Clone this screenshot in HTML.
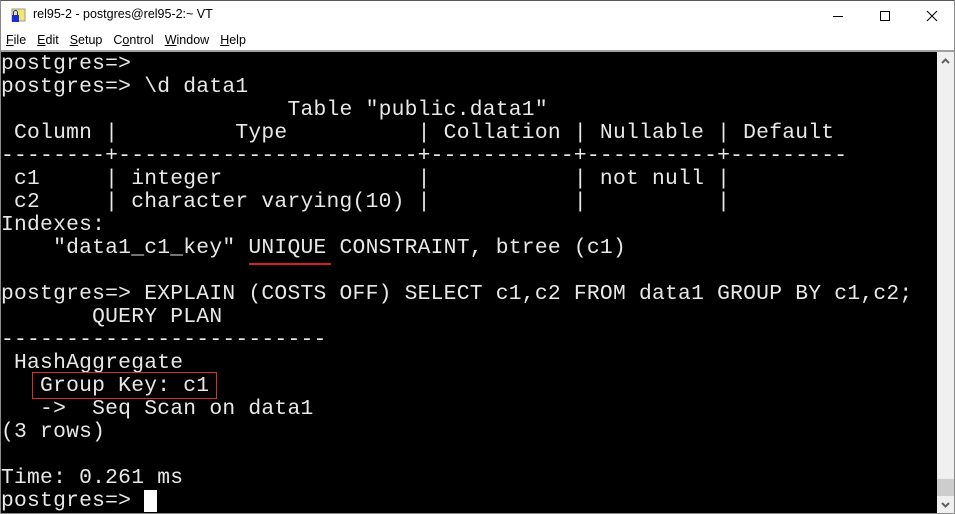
<!DOCTYPE html>
<html><head><meta charset="utf-8"><style>
*{margin:0;padding:0;box-sizing:border-box}
body{width:955px;height:514px;overflow:hidden;background:#fff;position:relative;font-family:"Segoe UI","Liberation Sans",sans-serif}
.frame{position:absolute;left:0;top:0;width:955px;height:514px;border:1px solid #8a8a8a;border-top:1px solid #5a5a5a}
.title{position:absolute;left:33px;top:7px;font-size:12.5px;color:#000}
.menu{position:absolute;top:33px;left:6px;font-size:12.5px;color:#000}
.menu span{margin-right:11px}
.menu u{text-decoration:underline}
.sep{position:absolute;left:1px;top:50px;width:953px;height:2px;background:#a0a0a0}
.term{position:absolute;left:1px;top:52px;width:936px;height:461px;background:#000}
pre{position:absolute;left:1px;top:53px;font-family:"Liberation Mono","Courier New",monospace;font-size:21.3px;letter-spacing:0.24px;line-height:23px;color:#e8e8e8;white-space:pre}
.sb{position:absolute;left:937px;top:52px;width:17px;height:461px;background:#f0f0f0}
.thumb{position:absolute;left:937px;top:479px;width:17px;height:17px;background:#cdcdcd}
.cursor{position:absolute;left:144px;top:490px;width:13px;height:22px;background:#fff}
</style></head><body>
<div class="frame"></div>
<svg style="position:absolute;left:11px;top:8px" width="16" height="15"><rect x="1" y="1" width="13" height="12" fill="#f5e76a" stroke="#999"/><rect x="1" y="7" width="7" height="7" fill="#1a2fd0"/><path d="M2.5 7 V4.5 a2 2 0 0 1 4 0 V7" stroke="#1a2fd0" fill="none"/></svg>
<div class="title">rel95-2 - postgres@rel95-2:~ VT</div>
<svg style="position:absolute;left:830px;top:8px" width="120" height="18"><line x1="3" y1="8.5" x2="13" y2="8.5" stroke="#000"/><rect x="50.5" y="3.5" width="9" height="9" fill="none" stroke="#000"/><path d="M97 3 L107 13 M107 3 L97 13" stroke="#000"/></svg>
<div class="menu"><span><u>F</u>ile</span><span><u>E</u>dit</span><span><u>S</u>etup</span><span>C<u>o</u>ntrol</span><span><u>W</u>indow</span><span><u>H</u>elp</span></div>
<div class="sep"></div>
<div class="term"></div>
<pre>postgres=>
postgres=> \d data1
                      Table "public.data1"
 Column |         Type          | Collation | Nullable | Default
--------+-----------------------+-----------+----------+---------
 c1     | integer               |           | not null |
 c2     | character varying(10) |           |          |
Indexes:
    "data1_c1_key" UNIQUE CONSTRAINT, btree (c1)

postgres=> EXPLAIN (COSTS OFF) SELECT c1,c2 FROM data1 GROUP BY c1,c2;
       QUERY PLAN
-------------------------
 HashAggregate
   Group Key: c1
   ->  Seq Scan on data1
(3 rows)

Time: 0.261 ms
postgres=> </pre>
<div style="position:absolute;left:249px;top:263px;width:82px;height:2px;background:#d02020"></div>
<div style="position:absolute;left:32px;top:372px;width:185px;height:27px;border:1px solid #d03030"></div>
<div class="cursor"></div>
<div class="sb"></div>
<svg style="position:absolute;left:939px;top:56px" width="13" height="10"><path d="M3 7 L6.5 3.5 L10 7" stroke="#606060" stroke-width="2" fill="none"/></svg>
<div class="thumb"></div>
<svg style="position:absolute;left:939px;top:500px" width="13" height="10"><path d="M3 3 L6.5 6.5 L10 3" stroke="#606060" stroke-width="2" fill="none"/></svg>
</body></html>
